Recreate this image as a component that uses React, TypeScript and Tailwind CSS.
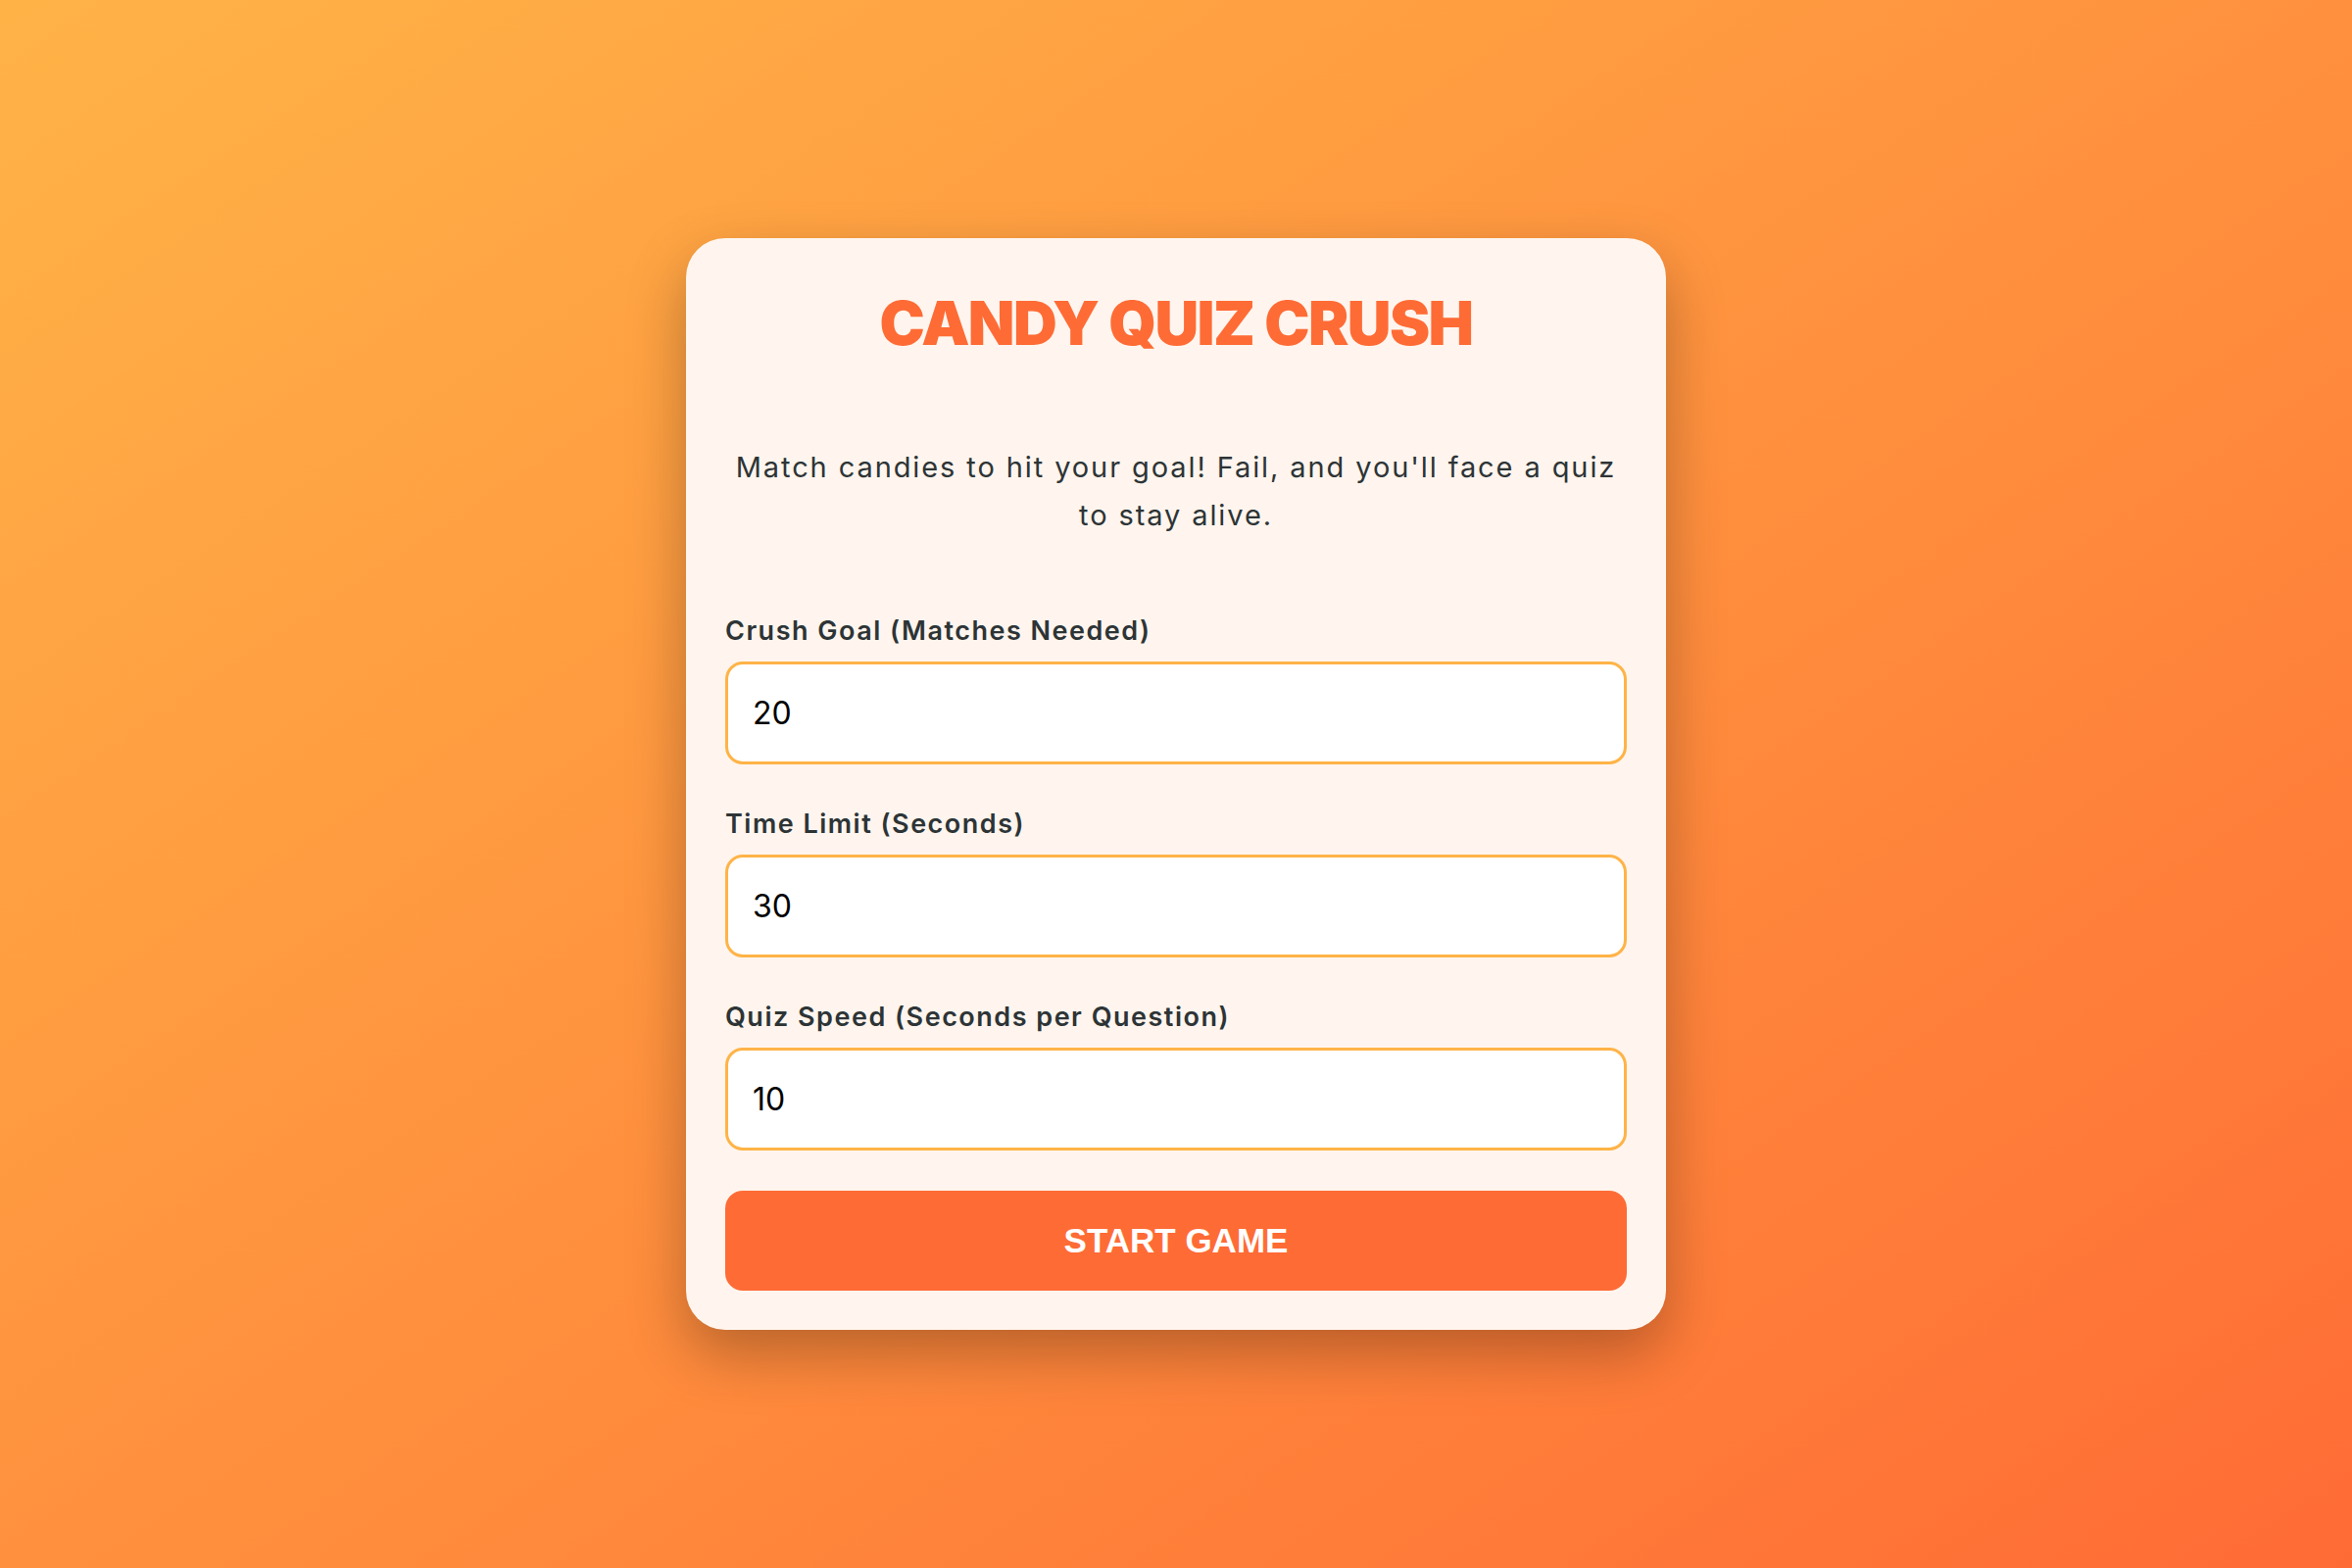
import { useState } from "react";

const fields = [
  { id: "goal", label: "Crush Goal (Matches Needed)", value: "20" },
  { id: "time", label: "Time Limit (Seconds)", value: "30" },
  { id: "quiz", label: "Quiz Speed (Seconds per Question)", value: "10" },
];

const App = () => {
  const [values, setValues] = useState<Record<string, string>>(
    Object.fromEntries(fields.map((f) => [f.id, f.value]))
  );

  return (
    <div
      className="min-h-screen w-full flex items-center justify-center bg-gradient-to-br from-[#ffb347] to-[#ff6b35]"
      style={{ fontFamily: "Inter, 'Noto Sans', sans-serif" }}
    >
      <div className="w-[1000px] rounded-[40px] bg-[#fff5ee] p-10 shadow-[0_25px_60px_rgba(0,0,0,0.28)]">
        <h1 className="h-[94px] leading-[94px] text-center text-[62px] font-black uppercase tracking-[-1.6px] text-[#ff6b35]">
          Candy Quiz Crush
        </h1>

        <p className="mt-[75px] text-center text-[29px] leading-[49px] tracking-[1.9px] text-[#2d3436]">
          Match candies to hit your goal! Fail, and you'll face a quiz to stay
          alive.
        </p>

        <div className="mt-[74px]">
          {fields.map((f) => (
            <div key={f.id} className="mb-[41px]">
              <label
                htmlFor={f.id}
                className="block text-[27px] leading-[39px] font-semibold tracking-[1.5px] text-[#2d3436]"
              >
                {f.label}
              </label>
              <input
                id={f.id}
                type="number"
                value={values[f.id]}
                onChange={(e) =>
                  setValues({ ...values, [f.id]: e.target.value })
                }
                className="mt-[12px] block w-full h-[105px] rounded-[18px] border-[3px] border-[#ffb347] bg-white px-[25px] text-[32px] text-black outline-none"
              />
            </div>
          ))}
        </div>

        <button
          className="block w-full h-[102px] rounded-[18px] bg-[#ff6b35] text-white text-[35px] font-bold uppercase"
          style={{ fontFamily: "'Liberation Sans', Arial, sans-serif" }}
        >
          Start Game
        </button>
      </div>
    </div>
  );
};

export default App;
